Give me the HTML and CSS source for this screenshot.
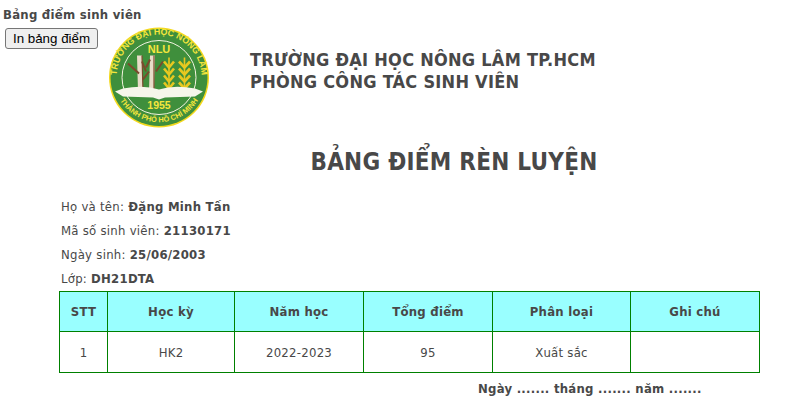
FILE: index.html
```html
<!DOCTYPE html>
<html lang="vi">
<head>
  <meta charset="UTF-8">
  <title>Bảng điểm sinh viên</title>
  <link rel="stylesheet" href="styles.css">
</head>
<body>
  <p class="pageTitle">Bảng điểm sinh viên</p>
  <div class="top">
    <button class="printButton">In bảng điểm</button>
    <svg class="logo" viewBox="0 0 100 100">
      <defs>
        <path id="arcTop" d="M8 56 A42.5 42.5 0 1 1 92 56"/>
        <path id="arcBottom" d="M6 62 A46 46 0 0 0 94 62"/>
      </defs>
      <circle cx="50" cy="50" r="50" fill="#f3d81c"/>
      <circle cx="50" cy="50" r="48.5" fill="#3f8f3c"/>
      <circle cx="50" cy="50" r="37" fill="#3f8f3c" stroke="#f4f4e0" stroke-width="1"/>
      <text class="ringText"><textPath href="#arcTop" startOffset="50%" text-anchor="middle">TRƯỜNG ĐẠI HỌC NÔNG LÂM</textPath></text>
      <text class="ringTextSmall"><textPath href="#arcBottom" startOffset="50%" text-anchor="middle">THÀNH PHỐ HỒ CHÍ MINH</textPath></text>
      <text class="nlu" x="50" y="25" text-anchor="middle">NLU</text>
      <path d="M28 28 L33 28 L34 64 L29 64Z M41 28 L46 28 L45 64 L40 64Z" fill="#e8dcc8"/>
      <path d="M19 36 L30 46 M47 44 L54 34 M34 52 L40 44 M33 34 L37 44 M41 32 L37 40" stroke="#7a4a2c" stroke-width="2" fill="none"/>
      <path d="M33 28 L34 64 M45 28 L45 64" stroke="#7a4a2c" stroke-width="1.2" fill="none"/>
      <path d="M60 30 V62 M75.500 30 V62" stroke="#e8c820" stroke-width="1.6"/>
      <path d="M55 34 L60 40 L65 34 M55 41 L60 47 L65 41 M55 48 L60 54 L65 48 M55 55 L60 61 L65 55 M70 34 L75.500 40 L81 34 M70 41 L75.500 47 L81 41 M70 48 L75.500 54 L81 48 M70 55 L75.500 61 L81 55" stroke="#e8c820" stroke-width="2.6" fill="none"/>
      <path d="M6 64 L14 61 Q35 57 50 62 Q65 57 86 61 L94 64 L86 69 L56 70 L50 72 L44 70 L14 69Z" fill="#f6f6ea"/>
      <text class="year" x="50" y="81" text-anchor="middle">1955</text>
    </svg>
    <div class="school">
      <p>TRƯỜNG ĐẠI HỌC NÔNG LÂM TP.HCM</p>
      <p>PHÒNG CÔNG TÁC SINH VIÊN</p>
    </div>
  </div>

  <h1 class="heading">BẢNG ĐIỂM RÈN LUYỆN</h1>

  <div class="info">
    <p>Họ và tên: <b>Đặng Minh Tấn</b></p>
    <p>Mã số sinh viên: <b>21130171</b></p>
    <p>Ngày sinh: <b>25/06/2003</b></p>
    <p>Lớp: <b>DH21DTA</b></p>
  </div>

  <table class="scores">
    <tr>
      <th class="col1">STT</th>
      <th class="col2">Học kỳ</th>
      <th class="col3">Năm học</th>
      <th class="col4">Tổng điểm</th>
      <th class="col5">Phân loại</th>
      <th class="col6">Ghi chú</th>
    </tr>
    <tr>
      <td>1</td>
      <td>HK2</td>
      <td>2022-2023</td>
      <td>95</td>
      <td>Xuất sắc</td>
      <td></td>
    </tr>
  </table>

  <p class="dateLine">Ngày ....... tháng ....... năm .......</p>
</body>
</html>
```

FILE: styles.css
```css
body, html {
  margin: 0;
  background-color: white;
}
body {
  padding: 7px 3px 0;
  color: #484848;
  font-family: "DejaVu Sans Condensed", "DejaVu Sans", sans-serif;
  font-size: 13px;
  letter-spacing: 0.02em;
  overflow: hidden;
}
p {
  margin: 0;
}
.pageTitle {
  font-weight: bold;
  height: 20px;
  line-height: 16px;
}
.top {
  display: flex;
  align-items: flex-start;
}
.printButton {
  margin: 1px 0 0 2px;
  width: 93px;
  height: 21px;
  padding: 0;
  font-family: "Liberation Sans", sans-serif;
  font-size: 13.33px;
  letter-spacing: normal;
  color: black;
  background-color: #efefef;
  border: 1px solid #767676;
  border-radius: 3px;
}
.logo {
  width: 100px;
  height: 101px;
  margin-left: 11px;
  letter-spacing: normal;
}
.ringText, .ringTextSmall, .nlu, .year {
  font-family: "Liberation Sans", sans-serif;
  font-weight: bold;
  fill: #f5e63c;
}
.ringText {
  font-size: 8.8px;
}
.ringTextSmall {
  font-size: 7.4px;
}
.nlu {
  font-size: 11px;
}
.year {
  font-size: 10.5px;
}
.school {
  margin: 22px 0 0 41px;
  font-size: 18px;
  font-weight: bold;
  line-height: 22px;
}
.heading {
  margin: 18px 0 0 0;
  padding-left: 105px;
  text-align: center;
  font-size: 24px;
  line-height: 32px;
  font-weight: bold;
}
.info {
  margin: 17px 0 0 58px;
}
.info p {
  height: 24px;
  line-height: 24px;
}
.scores {
  margin: 0 0 0 56px;
  width: 701px;
  table-layout: fixed;
  border-collapse: collapse;
}
.scores th, .scores td {
  border: 1px solid green;
  text-align: center;
  padding: 0;
}
.scores th {
  height: 39px;
  background-color: #99ffff;
}
.scores td {
  height: 40px;
}
.col1 { width: 47px; }
.col2 { width: 126px; }
.col3 { width: 128px; }
.col4 { width: 128px; }
.col5 { width: 137px; }
.dateLine {
  margin: 8px 0 0 475px;
  font-weight: bold;
}
```
